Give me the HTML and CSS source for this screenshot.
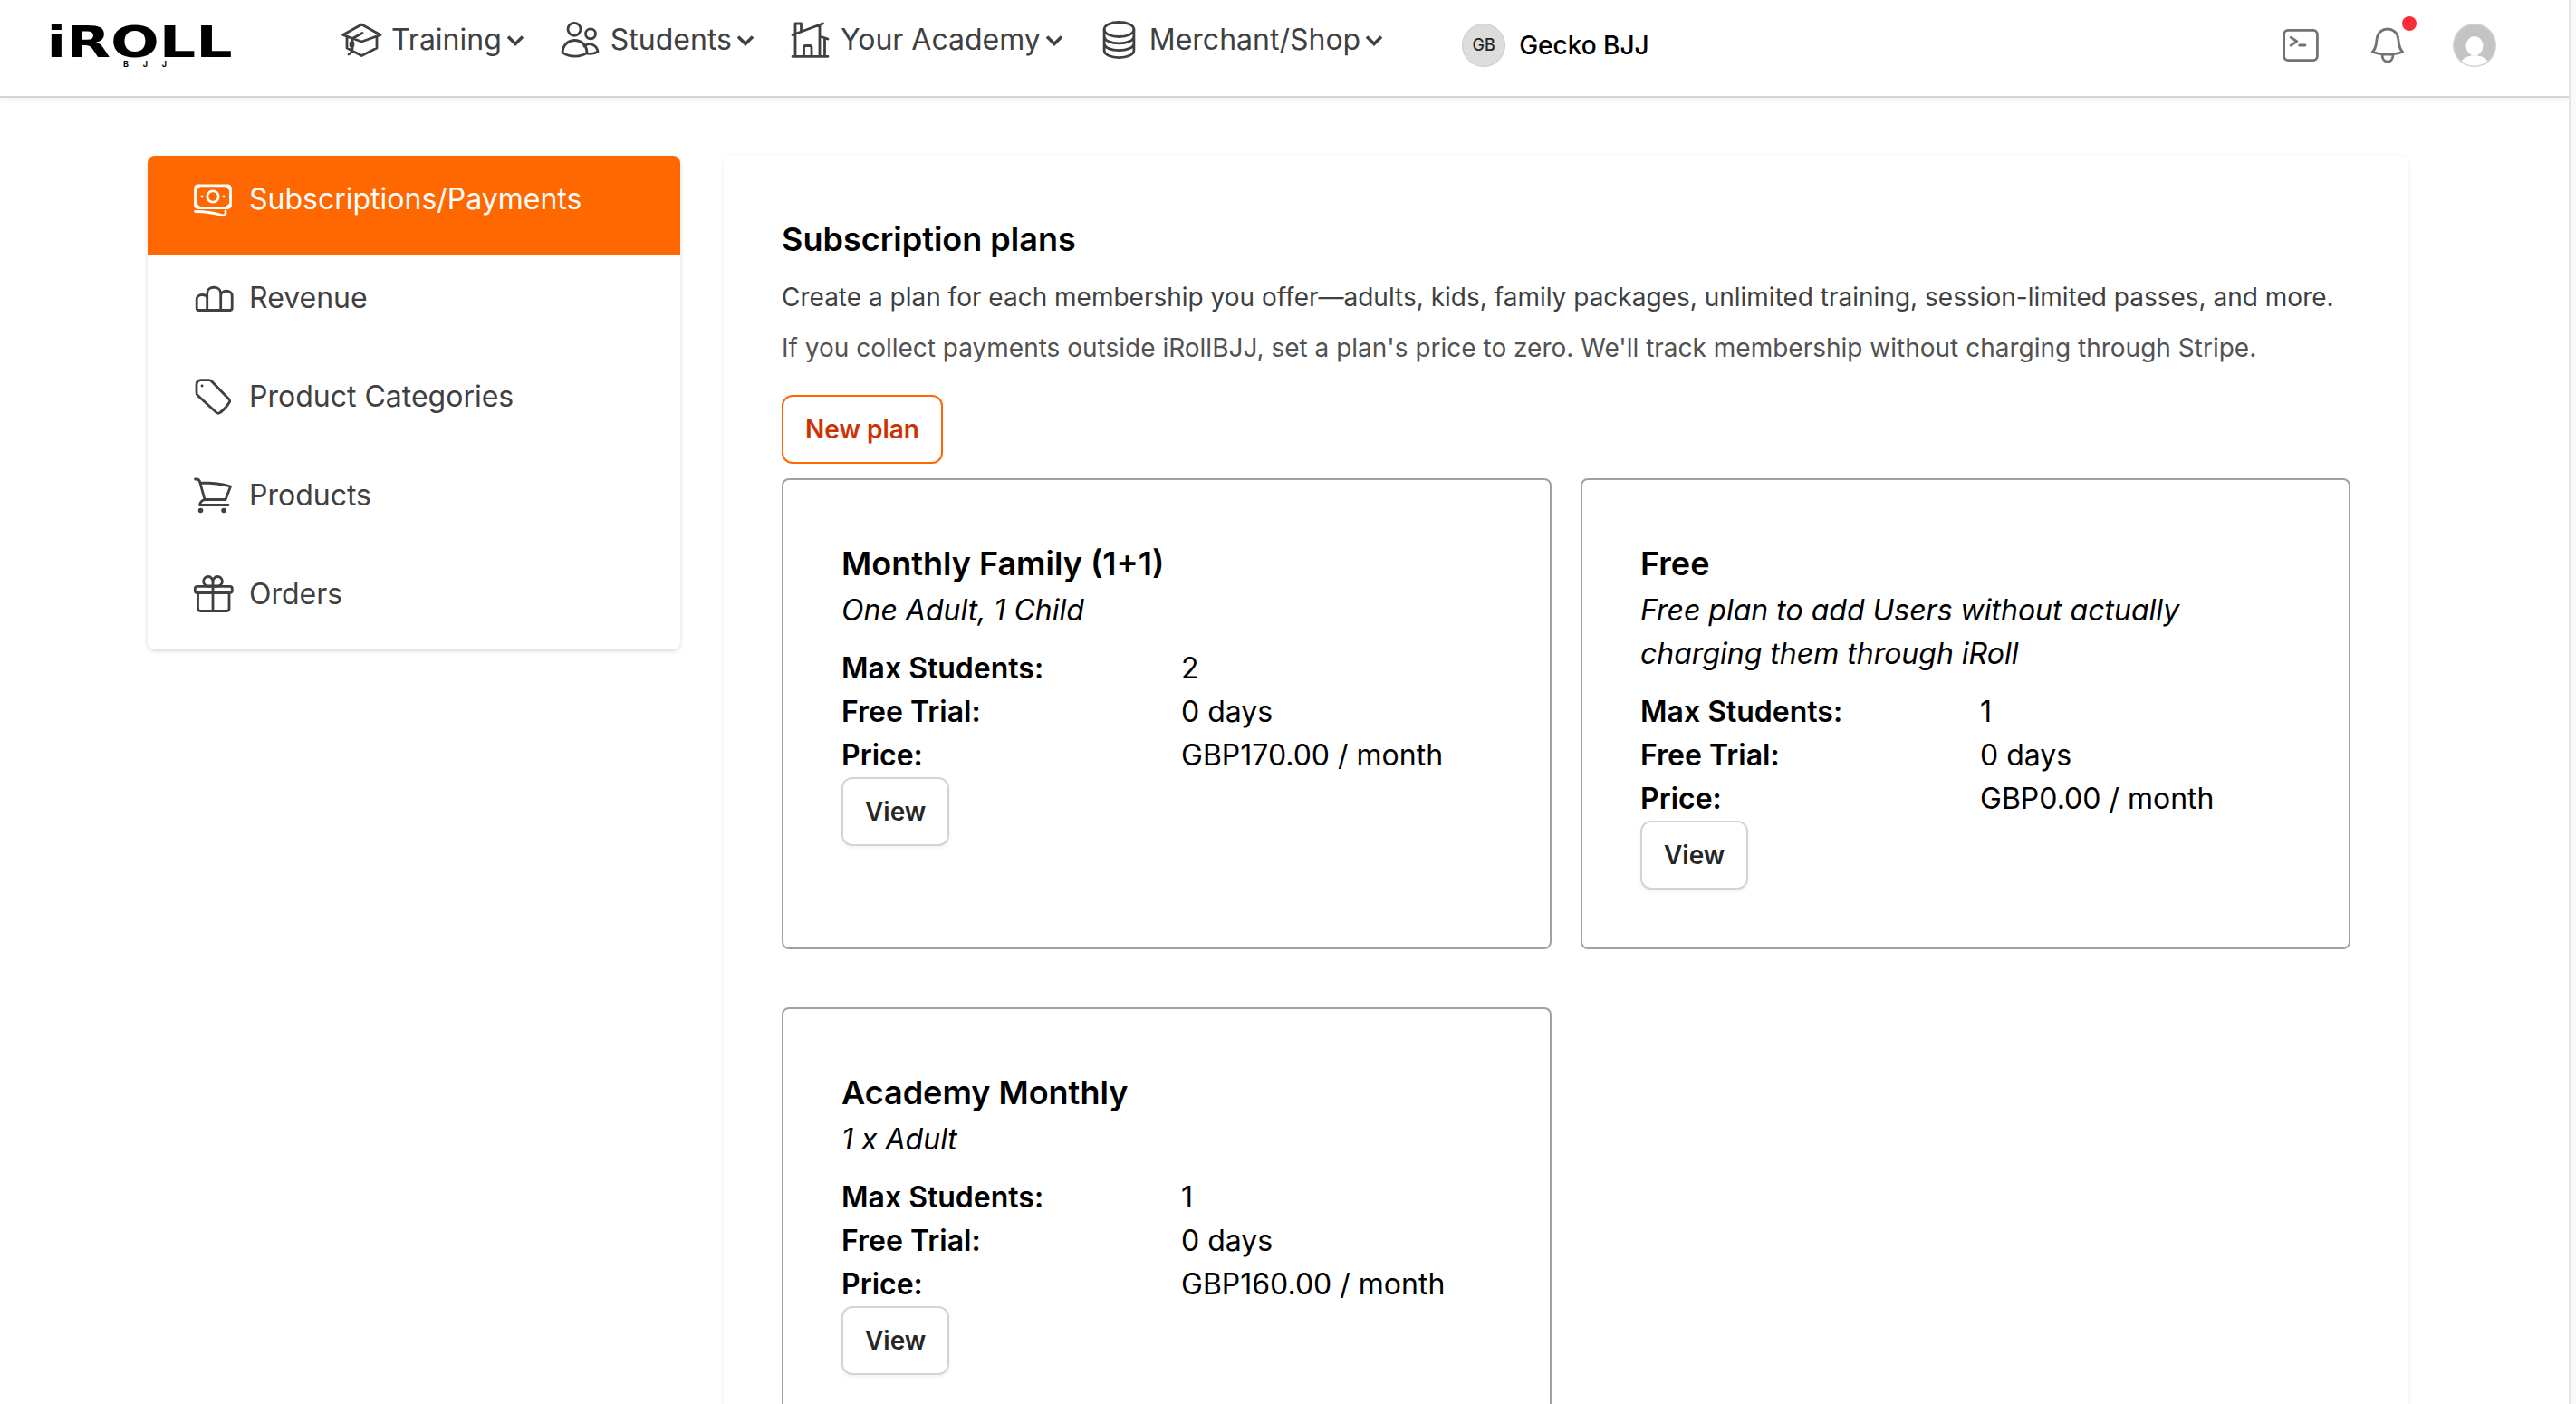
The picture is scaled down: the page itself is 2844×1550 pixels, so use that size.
FILE: index.html
```
<!DOCTYPE html>
<html lang="en">
<head>
  <meta charset="UTF-8">
  <title>iRoll BJJ</title>
  <link rel="stylesheet" href="styles.css">
</head>
<body>
  <div class="page">
    <header class="header">
      <svg class="logo" viewBox="0 0 204 52">
        <text class="logo-name" x="-4.500" y="38.500" textLength="205" lengthAdjust="spacingAndGlyphs">iROLL</text>
        <text class="logo-sub" x="80" y="49.500" textLength="48">BJJ</text>
      </svg>
      <nav class="nav">
        <a class="nav-item">
          <svg class="nav-icon" viewBox="0 0 48 48"><path d="m2.500 18.500 20.800-11.500L44 18.500 23.300 26 2.500 18.500zM7 20v13l16.300 8.500L40 33V20M24 16.500l-11 6V37l-4 3"/><ellipse cx="12.500" cy="29" rx="1.500" ry="2.500"/></svg>
          Training
          <svg class="chevron" viewBox="0 0 20 20"><path d="m2 6.500 8 8 8-8"/></svg>
        </a>
        <a class="nav-item">
          <svg class="nav-icon" viewBox="0 0 48 48"><circle cx="16" cy="12.300" r="7"/><circle cx="34" cy="17.300" r="5.500"/><path d="M3 38C4 20 29 20 30 38c-6 5.500-20 5.500-27 0zM27 31c6-5 14-1 15 6-3 2-8 3-13 2"/></svg>
          Students
          <svg class="chevron" viewBox="0 0 20 20"><path d="m2 6.500 8 8 8-8"/></svg>
        </a>
        <a class="nav-item">
          <svg class="nav-icon" viewBox="0 0 48 48"><path d="M3 42.300h39M6 42V17.500M3 18.500 36.500 6M6 16.500V6h6.500v8M33 8v34M33 20l9 3M38.500 22.500V42M15.500 42V32.500q0-2 2-2H22q2 0 2 2V42"/></svg>
          Your Academy
          <svg class="chevron" viewBox="0 0 20 20"><path d="m2 6.500 8 8 8-8"/></svg>
        </a>
        <a class="nav-item">
          <svg class="nav-icon" viewBox="0 0 48 48"><ellipse cx="22.500" cy="12.500" rx="16.400" ry="8"/><path d="M6.100 12.500v23c0 10.700 32.800 10.700 32.800 0v-23M6.100 20c0 10.500 32.800 10.500 32.800 0M6.100 27.700c0 10.500 32.800 10.500 32.800 0"/></svg>
          Merchant/Shop
          <svg class="chevron" viewBox="0 0 20 20"><path d="m2 6.500 8 8 8-8"/></svg>
        </a>
      </nav>
      <div class="academy">
        <span class="academy-badge">GB</span>
        Gecko BJJ
      </div>
      <div class="tools">
        <svg class="tool-icon" viewBox="0 0 48 48"><rect x="5.600" y="7.400" width="36.800" height="33.200" rx="4.500"/><path d="m13.300 15.300 6.500 4.400-6.500 4.500M22.700 24H29"/></svg>
        <span class="bell">
          <svg class="tool-icon" viewBox="0 0 48 48"><path d="M7.200 31.500c5-5 4-10 5-15 2-14 21.500-14 23.500 0 1 5 0 10 5 15-10 3.300-23.500 3.300-33.500 0zM18 34.500c0 10.200 12 10.200 12 0"/></svg>
          <span class="dot"></span>
        </span>
        <svg class="avatar" viewBox="0 0 48 48"><circle cx="24" cy="24" r="24" fill="#d0d0d0"/><circle cx="24" cy="24" r="22.500" fill="#c4c4c4"/><ellipse cx="24" cy="24.700" rx="9.500" ry="10.700" fill="#fff"/><path d="M9.500 41c8-8 21-8 29 0-8 7.500-21 7.500-29 0z" fill="#fff"/></svg>
      </div>
    </header>

    <main class="main">
      <aside class="sidebar">
        <a class="side-item active">
          <svg class="side-icon" viewBox="0 0 48 48"><rect x="4.500" y="8.800" width="39" height="24.700" rx="3"/><circle cx="24" cy="21" r="6.200"/><path d="M4.500 37.500c11 0 19 1 29 4 3.500.8 5 0 4.500-4.500M12 21h.1M36 21h.1M5.500 12.500l3.500-3M42.500 12.500l-3.500-3M5.500 30l3.500 3M42.500 30l-3.500 3"/></svg>
          Subscriptions/Payments
        </a>
        <a class="side-item">
          <svg class="side-icon" viewBox="0 0 48 48"><path d="M6.200 35.500V25.500c0-6.500 11.500-6.500 11.500-1V19c0-9 15-9 15 0v2.500c0-7 12.500-7 12.500 0v13.500q0 2.500-2.500 2.500H8.500q-2.300 0-2.300-2M17.700 24v13.500M32.700 20v17.500"/></svg>
          Revenue
        </a>
        <a class="side-item">
          <svg class="side-icon" viewBox="0 0 48 48"><path d="M6 11q0-5.300 5-5.300h8.500q2 0 3.500 1.600L42 27q1.200 1.500.3 3-4 7-10.300 11.500-2 1.500-4 0L7.200 22.500Q6 21.500 6 19.500zM12 12h.1"/></svg>
          Product Categories
        </a>
        <a class="side-item">
          <svg class="side-icon" viewBox="0 0 48 48"><path d="M4.500 6h1.500q3 0 3.800 3.500L15 28.500h23l5.500-14.500c-10-3-20-4-33-4M15 28.500q-5 1.500-5.500 6H41"/><path class="wheels" d="M10.500 40.500h.1M36 40.500h.1"/></svg>
          Products
        </a>
        <a class="side-item">
          <svg class="side-icon" viewBox="0 0 48 48"><rect x="4.300" y="15.300" width="41" height="7.200" rx="2.500"/><path d="M7.500 22.500v17q0 3 3 3h29q2.500 0 2.500-3v-17M24 9.500v33M24 15h-5.500c-7-1-6-10.500.5-10.500 3 0 5 3 5 6 0-3 2-6 5-6 6.500 0 7.500 9.500.5 10.500z"/></svg>
          Orders
        </a>
      </aside>

      <section class="panel">
        <h1 class="panel-title">Subscription plans</h1>
        <p class="intro">Create a plan for each membership you offer—adults, kids, family packages, unlimited training, session-limited passes, and more.</p>
        <p class="intro note">If you collect payments outside iRollBJJ, set a plan's price to zero. We'll track membership without charging through Stripe.</p>
        <button class="btn btn-new">New plan</button>
        <div class="plans">
          <article class="plan">
            <h2 class="plan-name">Monthly Family (1+1)</h2>
            <p class="plan-desc">One Adult, 1 Child</p>
            <dl class="plan-info">
              <dt>Max Students:</dt><dd>2</dd>
              <dt>Free Trial:</dt><dd>0 days</dd>
              <dt>Price:</dt><dd>GBP170.00 / month</dd>
            </dl>
            <button class="btn">View</button>
          </article>
          <article class="plan">
            <h2 class="plan-name">Free</h2>
            <p class="plan-desc">Free plan to add Users without actually charging them through iRoll</p>
            <dl class="plan-info">
              <dt>Max Students:</dt><dd>1</dd>
              <dt>Free Trial:</dt><dd>0 days</dd>
              <dt>Price:</dt><dd>GBP0.00 / month</dd>
            </dl>
            <button class="btn">View</button>
          </article>
          <article class="plan">
            <h2 class="plan-name">Academy Monthly</h2>
            <p class="plan-desc">1 x Adult</p>
            <dl class="plan-info">
              <dt>Max Students:</dt><dd>1</dd>
              <dt>Free Trial:</dt><dd>0 days</dd>
              <dt>Price:</dt><dd>GBP160.00 / month</dd>
            </dl>
            <button class="btn">View</button>
          </article>
        </div>
      </section>
    </main>
  </div>
</body>
</html>
```
FILE: styles.css
```
* {
  box-sizing: border-box;
}
body {
  margin: 0;
  height: 1550px;
  overflow: hidden;
  background: #fafafa;
  font-family: Inter, sans-serif;
  font-size: 32px;
  line-height: 48px;
  color: #000;
}
h1, h2, p, dl, dd {
  margin: 0;
}
svg {
  flex: none;
  fill: none;
  stroke: currentColor;
  stroke-width: 2.8;
  stroke-linecap: round;
  stroke-linejoin: round;
}
.page {
  width: 2838px;
  height: 1550px;
  overflow: hidden;
  background: #fff;
  border-right: 2px solid #e5e5e5;
}
.header {
  display: flex;
  height: 108px;
  padding-left: 56px;
  border-bottom: 2px solid #d4d4d4;
  box-shadow: 0 2px 6px rgba(0, 0, 0, 0.06);
}
.logo {
  width: 204px;
  height: 52px;
  margin-top: 24px;
  overflow: visible;
  stroke: none;
  fill: #000;
}
.logo-name {
  font-family: "DejaVu Sans", sans-serif;
  font-size: 48.5px;
  font-weight: 700;
}
.logo-sub {
  font-size: 9px;
  font-weight: 700;
}
.nav {
  display: flex;
  gap: 39px;
  margin: 20px 0 0 116px;
  color: #404040;
}
.nav-item {
  display: flex;
  height: 48px;
  align-items: center;
}
.nav-icon {
  width: 48px;
  height: 48px;
  margin-right: 8px;
}
.chevron {
  width: 20px;
  height: 20px;
  margin-left: 5px;
  stroke-width: 3.5;
  stroke-linecap: butt;
  stroke-linejoin: miter;
}
.academy {
  display: flex;
  align-items: center;
  gap: 15px;
  height: 48px;
  margin: 26px 0 0 87px;
  font-size: 28px;
  font-weight: 500;
}
.academy-badge {
  width: 48px;
  height: 48px;
  border: 1px solid #ccc;
  border-radius: 50%;
  background: #dcdcdc;
  color: #262626;
  font-size: 18px;
  line-height: 46px;
  text-align: center;
}
.tools {
  display: flex;
  gap: 48px;
  height: 48px;
  margin: 26px 80px 0 auto;
  color: #737373;
}
.tool-icon {
  display: block;
  width: 48px;
  height: 48px;
}
.bell {
  position: relative;
}
.dot {
  position: absolute;
  top: -8px;
  right: -8px;
  width: 16px;
  height: 16px;
  border-radius: 50%;
  background: #fb2c36;
}
.avatar {
  width: 48px;
  height: 48px;
  stroke: none;
}
.main {
  display: flex;
  align-items: flex-start;
  gap: 48px;
  padding: 64px 0 0 163px;
}
.sidebar {
  width: 588px;
  height: 545px;
  border-radius: 8px;
  overflow: hidden;
  box-shadow: 0 2px 5px rgba(0, 0, 0, 0.15);
  color: #404040;
}
.side-item {
  display: flex;
  align-items: center;
  height: 109px;
  padding: 0 0 13px 48px;
}
.side-item.active {
  background: #ff6700;
  color: #fff;
}
.side-icon {
  width: 48px;
  height: 48px;
  margin-right: 16px;
}
.wheels {
  stroke-width: 5.5;
}
.panel {
  width: 1860px;
  height: 1700px;
  padding: 64px;
  border-radius: 8px;
  box-shadow: 0 1px 6px rgba(0, 0, 0, 0.07);
}
.panel-title,
.plan-name {
  font-size: 36px;
  line-height: 56px;
  font-weight: 600;
}
.intro {
  margin-top: 16px;
  font-size: 28px;
  line-height: 40px;
  color: #404040;
  white-space: nowrap;
}
.intro.note {
  color: #525252;
}
.btn {
  display: block;
  height: 76px;
  padding: 0 24px;
  border: 2px solid #d4d4d4;
  border-radius: 12px;
  background: #fff;
  box-shadow: 0 2px 4px rgba(0, 0, 0, 0.06);
  font: 600 28px/40px Inter, sans-serif;
  color: #262626;
}
.btn-new {
  margin-top: 32px;
  border-color: #ff6700;
  box-shadow: none;
  color: #cc3300;
}
.plans {
  display: grid;
  grid-template-columns: 850px 850px;
  gap: 64px 32px;
  margin-top: 16px;
}
.plan {
  min-height: 520px;
  padding: 64px;
  border: 2px solid #a1a1a1;
  border-radius: 8px;
}
.plan-desc {
  font-style: italic;
}
.plan-info {
  display: grid;
  grid-template-columns: 1fr 1fr;
  column-gap: 32px;
  margin-top: 16px;
}
.plan-info dt {
  font-weight: 600;
}
```
